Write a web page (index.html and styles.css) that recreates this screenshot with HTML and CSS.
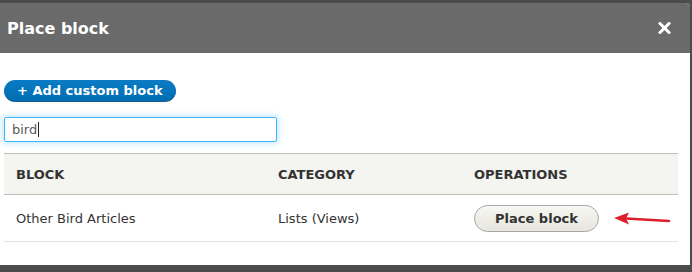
FILE: index.html
```html
<!DOCTYPE html>
<html lang="en">
<head>
    <meta charset="UTF-8">
    <title>Place block</title>
    <link rel="stylesheet" href="styles.css">
</head>
<body>
    <div class="dialog">
        <div class="dialog-header">
            <h1>Place block</h1>
            <button class="close-btn" aria-label="Close">
                <svg width="13" height="12" viewBox="0 0 13 12">
                    <path d="M2 1.5 L11 10.5 M11 1.5 L2 10.5" stroke="#ffffff" stroke-width="3" stroke-linecap="square"/>
                </svg>
            </button>
        </div>
        <div class="dialog-content">
            <div class="actions">
                <a class="add-btn" href="#">+ Add custom block</a>
            </div>
            <div class="search-field">bird<span class="caret"></span></div>
            <table class="block-table">
                <thead>
                    <tr>
                        <th class="col-block">Block</th>
                        <th class="col-category">Category</th>
                        <th class="col-ops">Operations</th>
                    </tr>
                </thead>
                <tbody>
                    <tr>
                        <td>Other Bird Articles</td>
                        <td>Lists (Views)</td>
                        <td class="ops-cell">
                            <button class="place-btn">Place block</button>
                            <svg class="arrow" width="60" height="14" viewBox="0 0 60 14">
                                <line x1="14" y1="6.5" x2="57" y2="9" stroke="#dd1f2c" stroke-width="2.6" stroke-linecap="round"/>
                                <polygon points="2,6 17,0.5 14,6.5 17,12.5" fill="#dd1f2c"/>
                            </svg>
                        </td>
                    </tr>
                </tbody>
            </table>
        </div>
    </div>
</body>
</html>
```

FILE: styles.css
```css
body {
    margin: 0;
    padding-top: 3px;
    background-color: #4b4b4b;
    font-family: "DejaVu Sans", sans-serif;
    height: 269px;
    overflow: hidden;
}

.dialog {
    width: 690px;
    height: 262px;
    background-color: #ffffff;
    border-radius: 0 4px 0 0;
    overflow: hidden;
}

.dialog-header {
    height: 50px;
    background-color: #6a6a6a;
    display: flex;
    align-items: center;
    justify-content: space-between;
    padding: 0 19px 0 7px;
}

.dialog-header h1 {
    margin: 0;
    font-size: 16px;
    font-weight: bold;
    color: #ffffff;
}

.close-btn {
    border: none;
    background: none;
    padding: 0;
    width: 13px;
    height: 12px;
    display: block;
}

.close-btn svg {
    display: block;
}

.dialog-content {
    padding: 27px 12px 0 4px;
}

.actions {
    display: flex;
}

.add-btn {
    display: block;
    height: 22px;
    line-height: 22px;
    padding: 0 13px;
    box-sizing: border-box;
    border-radius: 20px;
    background: linear-gradient(#0a7bc4, #006db3);
    border-bottom: 1px solid #1d5a8c;
    color: #ffffff;
    font-size: 13px;
    font-weight: bold;
    text-decoration: none;
    white-space: nowrap;
}

.search-field {
    margin-top: 15px;
    width: 273px;
    height: 25px;
    box-sizing: border-box;
    border: 1px solid #40b6ff;
    border-radius: 2px;
    box-shadow: 0 0 6px 1px #b5e2ff;
    padding: 0 7px;
    font-size: 13px;
    line-height: 23px;
    color: #595959;
}

.caret {
    display: inline-block;
    width: 1px;
    height: 15px;
    background-color: #222222;
    vertical-align: -3px;
    margin-left: 1px;
}

.block-table {
    margin-top: 11px;
    width: 674px;
    border-collapse: collapse;
    font-size: 13px;
    color: #333333;
    table-layout: fixed;
}

.block-table th {
    height: 40px;
    padding: 0 12px;
    background-color: #f4f4f0;
    border-top: 1px solid #bfbfba;
    border-bottom: 1px solid #bfbfba;
    text-align: left;
    text-transform: uppercase;
    font-weight: bold;
}

.col-block {
    width: 238px;
}

.col-category {
    width: 172px;
}

.block-table td {
    height: 46px;
    padding: 0 12px;
    border-bottom: 1px solid #e6e4df;
}

.ops-cell {
    position: relative;
}

.place-btn {
    width: 125px;
    height: 27px;
    padding: 0 20px;
    border: 1px solid #a6a6a6;
    border-radius: 20px;
    background: linear-gradient(#f7f7f3, #e6e6dd);
    font-family: "DejaVu Sans", sans-serif;
    font-size: 13px;
    font-weight: bold;
    color: #333333;
    display: block;
}

/* red annotation arrow pointing at the button */
.arrow {
    position: absolute;
    left: 150px;
    top: 17px;
}
```
